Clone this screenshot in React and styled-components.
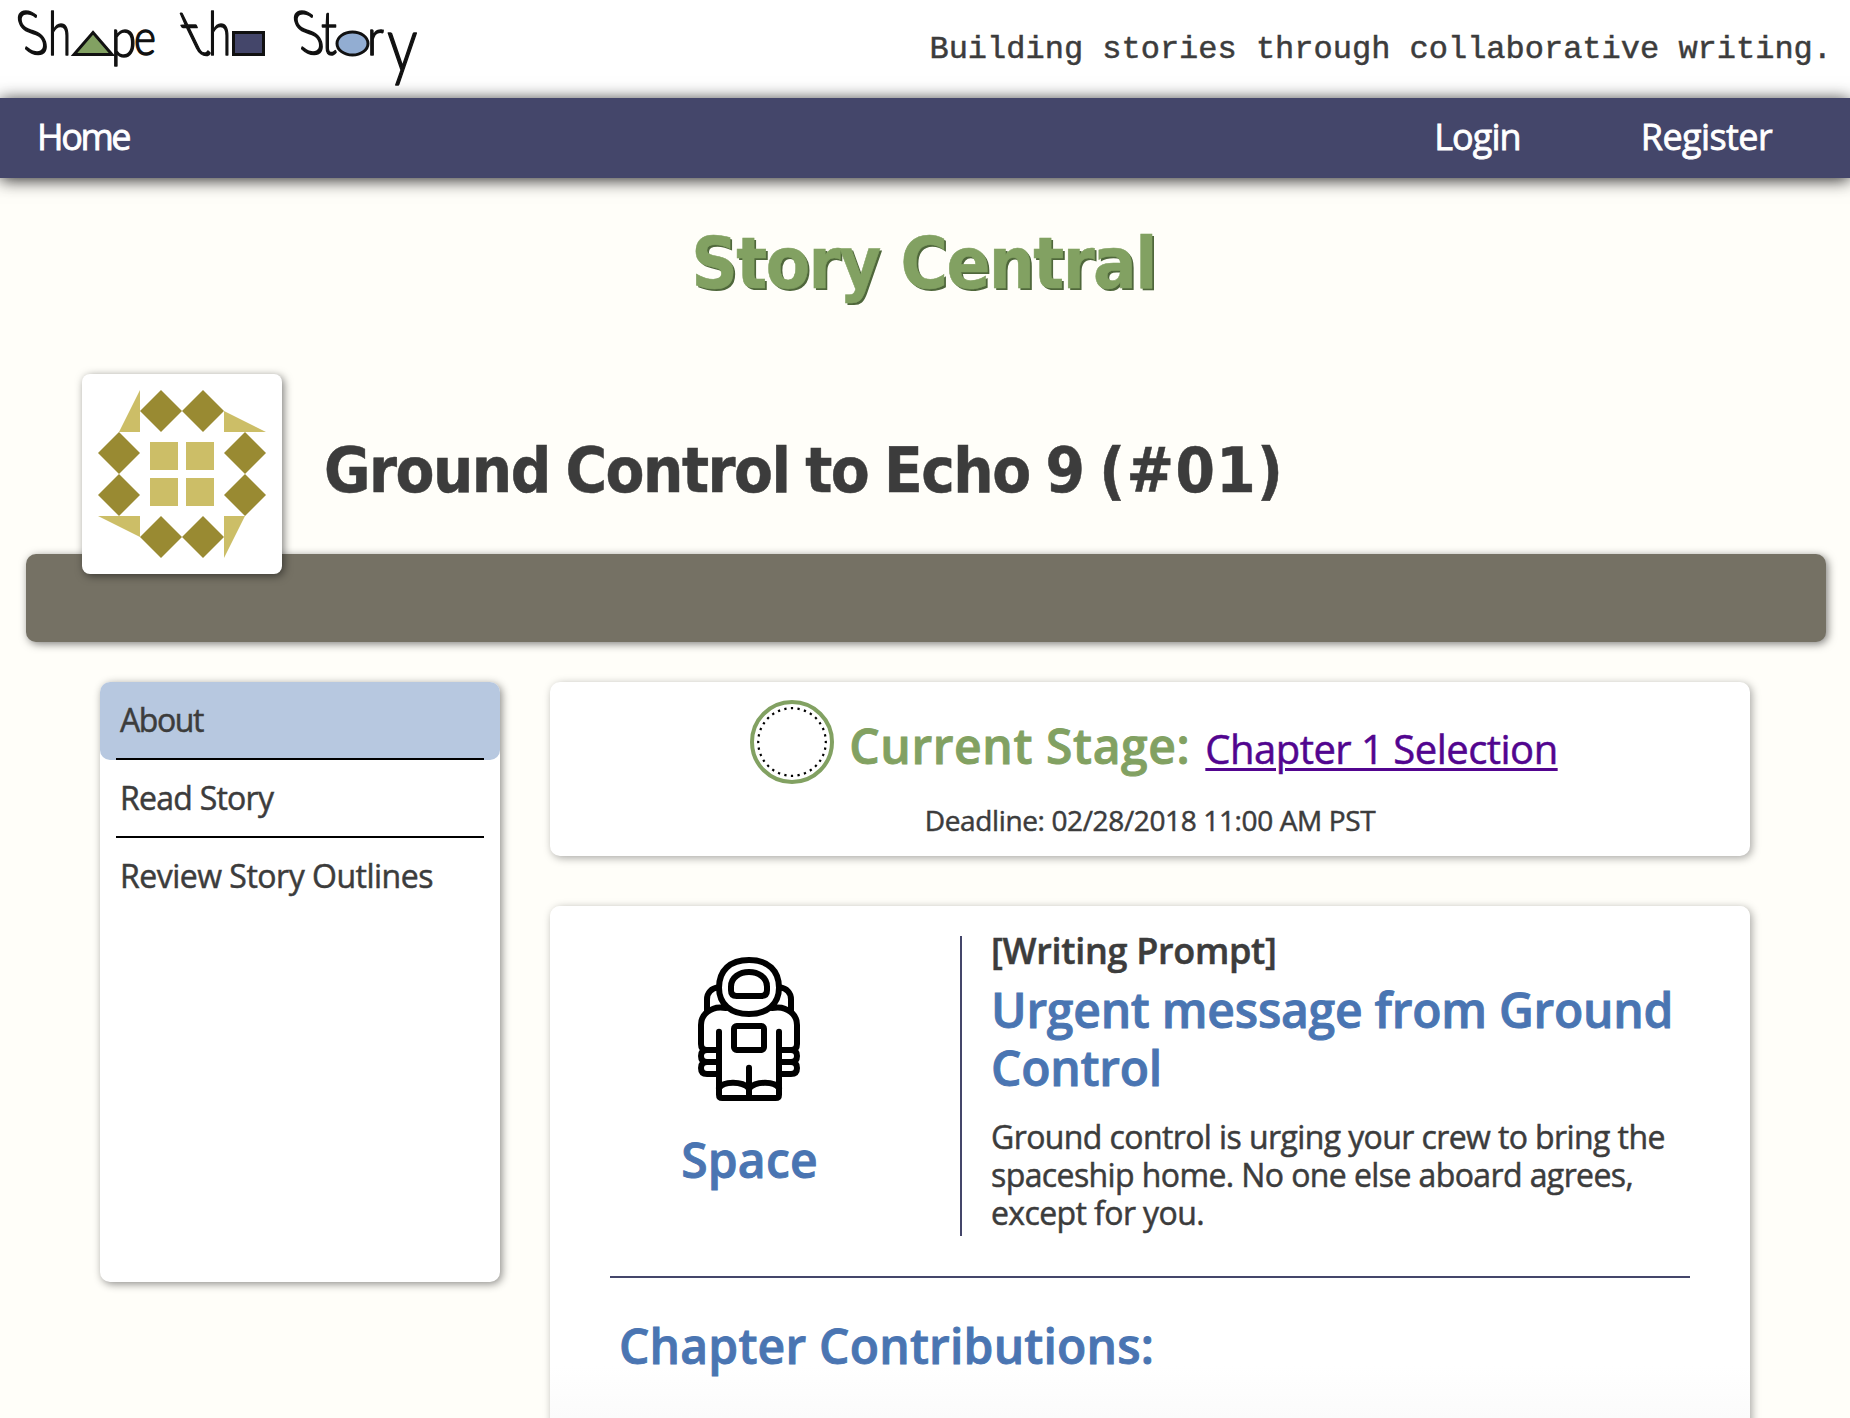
import React from "react";
import styled, { createGlobalStyle } from "styled-components";

const ink = "#3c3c3c";
const navy = "#44466a";
const green = "#82a162";
const blue = "#4a75b2";

const Global = createGlobalStyle`
  * { box-sizing: border-box; margin: 0; padding: 0; }
  body {
    margin: 0;
    background: #fffef9;
    color: ${ink};
    font-family: "Open Sans", "Noto Sans", sans-serif;
    -webkit-text-stroke: 0.5px;
  }
`;

const Page = styled.div`
  height: 1418px;
  overflow: hidden;
  background: #fffef9;
`;

const Header = styled.header`
  height: 98px;
  padding: 8px 18px 0;
  display: flex;
  justify-content: space-between;
  background: #fff;
`;

const LogoArt = styled.svg`
  display: block;
  overflow: visible;
`;

const Tagline = styled.p`
  padding-top: 2px;
  font-family: "Liberation Mono", monospace;
  font-size: 32px;
  line-height: 80px;
  white-space: nowrap;
`;

const Nav = styled.nav`
  position: relative;
  height: 80px;
  padding: 0 78px 3px 37px;
  display: flex;
  align-items: center;
  background: ${navy};
  box-shadow: 0 2px 16px rgba(0, 0, 0, 0.85);
  -webkit-text-stroke: 0.8px;
`;

const NavLink = styled.a`
  color: #fff;
  font-size: 36px;
  letter-spacing: ${(p) => p.$track}px;
  margin-left: ${(p) => p.$gap || 0}px;
  ${(p) => p.$push && "margin-left: auto;"}
`;

const PageTitle = styled.h1`
  margin-top: 42px;
  padding-right: 3px;
  font-family: "DejaVu Sans Condensed", "DejaVu Sans", sans-serif;
  font-stretch: condensed;
  font-size: 72px;
  line-height: 87px;
  letter-spacing: -1.6px;
  text-align: center;
  color: ${green};
  text-shadow: 2px 2px 0 #4f673b;
`;

const StoryHead = styled.section`
  height: 180px;
  margin-top: 67px;
  padding-left: 82px;
  display: flex;
  gap: 42px;
`;

const Avatar = styled.div`
  position: relative;
  z-index: 1;
  width: 200px;
  height: 200px;
  flex: none;
  border-radius: 8px;
  background: #fff;
  box-shadow: 2px 2px 8px rgba(0, 0, 0, 0.5);
  svg { display: block; }
`;

const StoryTitle = styled.h2`
  padding-top: 58px;
  font-family: "DejaVu Sans Condensed", "DejaVu Sans", sans-serif;
  font-stretch: condensed;
  font-size: 63px;
  line-height: 78px;
  letter-spacing: -1.5px;
  word-spacing: -2.4px;
  white-space: nowrap;
`;

const StoryNumber = styled.span`
  letter-spacing: 1.4px;
`;

const Band = styled.div`
  height: 88px;
  margin: 0 24px 0 26px;
  border-radius: 10px;
  background: #757164;
  box-shadow: 2px 2px 8px rgba(0, 0, 0, 0.5);
`;

const Columns = styled.main`
  padding: 40px 100px 0;
  display: flex;
  align-items: flex-start;
  gap: 50px;
`;

const Sidebar = styled.aside`
  width: 400px;
  height: 600px;
  flex: none;
  border-radius: 10px;
  background: #fff;
  box-shadow: 2px 2px 8px rgba(0, 0, 0, 0.45);
`;

const MenuItem = styled.a`
  display: block;
  height: 78px;
  padding: 0 16px;
  border-radius: 10px;
  background: ${(p) => (p.$active ? "#b7c8e0" : "transparent")};
  font-size: 32px;
  letter-spacing: ${(p) => p.$track}px;
`;

const MenuLabel = styled.span`
  display: block;
  height: 78px;
  padding-left: 4px;
  line-height: 76px;
  border-bottom: ${(p) => (p.$rule ? "2px solid #000" : "none")};
`;

const Content = styled.div`
  width: 1200px;
  display: flex;
  flex-direction: column;
  gap: 50px;
`;

const Card = styled.section`
  border-radius: 10px;
  background: #fff;
  box-shadow: 2px 2px 8px rgba(0, 0, 0, 0.35);
`;

const StageCard = styled(Card)`
  height: 174px;
  padding-top: 18px;
`;

const StageRow = styled.div`
  height: 84px;
  padding-left: 8px;
  display: flex;
  justify-content: center;
  gap: 15px;
`;

const StageText = styled.div`
  display: flex;
  align-items: baseline;
  gap: 15px;
  line-height: 91px;
`;

const StageLabel = styled.h2`
  font-size: 48px;
  font-weight: 600;
  letter-spacing: 0.6px;
  color: ${green};
  -webkit-text-stroke: 0.9px;
`;

const StageLink = styled.a`
  font-size: 40px;
  letter-spacing: -0.52px;
  color: #52058f;
  text-decoration: underline;
  text-decoration-thickness: 3px;
  text-underline-offset: 4px;
`;

const Deadline = styled.p`
  margin-top: 17px;
  font-size: 28px;
  line-height: 38px;
  letter-spacing: -0.37px;
  text-align: center;
`;

const PromptCard = styled(Card)`
  height: 560px;
  padding: 30px 60px 0;
  background: linear-gradient(#fff 460px, #fbfbfb 512px);
`;

const PromptRow = styled.div`
  height: 300px;
  display: flex;
`;

const Genre = styled.div`
  width: 352px;
  padding: 21px 72px 0 0;
  border-right: 2px solid ${navy};
  display: flex;
  flex-direction: column;
  align-items: center;
`;

const Heading = styled.h2`
  font-size: 48px;
  font-weight: 600;
  line-height: 58px;
  letter-spacing: ${(p) => p.$track}px;
  color: ${blue};
  -webkit-text-stroke: 0.9px;
`;

const GenreName = styled(Heading)`
  margin-top: 30px;
  padding-left: 1px;
`;

const Prompt = styled.div`
  flex: 1;
  padding: 1px 0 0 29px;
`;

const PromptTag = styled.h3`
  margin-bottom: 16px;
  font-size: 36px;
  font-weight: 600;
  line-height: 28px;
  letter-spacing: -0.3px;
`;

const PromptBody = styled.p`
  margin-top: 21px;
  font-size: 32px;
  line-height: 38px;
  letter-spacing: -0.6px;
`;

const Rule = styled.hr`
  height: 2px;
  margin: 40px 0 39px;
  border: 0;
  background: ${navy};
`;

const Contributions = styled(Heading)`
  padding-left: 9px;
`;

const Glyph = ({ x, y, size, sx = 1, skew = 0, children }) => (
  <text
    transform={`translate(${x} ${y}) skewX(${skew}) scale(${sx} 1)`}
    fontSize={size}
    fontFamily="Lato, sans-serif"
    fontWeight="300"
    fill="#111"
    stroke="#111"
    strokeWidth="1.6"
    strokeLinejoin="round"
  >
    {children}
  </text>
);

const Logo = () => (
  <LogoArt width="400" height="82" viewBox="0 0 400 82" aria-label="Shape the Story">
    <Glyph x={7} y={46} size={60} sx={0.84} skew={17}>S</Glyph>
    <Glyph x={30} y={47} size={62} sx={0.68}>h</Glyph>
    <path d="M75 24.5 L94 46.5 H56 Z" fill={green} stroke="#111" strokeWidth="3" />
    <Glyph x={93} y={49} size={54} sx={0.85}>p</Glyph>
    <Glyph x={116} y={47} size={50} sx={0.84}>e</Glyph>
    <Glyph x={176} y={47} size={62} sx={0.85} skew={26}>t</Glyph>
    <Glyph x={190} y={47} size={62} sx={0.68}>h</Glyph>
    <rect x="215.5" y="24.5" width="30" height="22" fill={navy} stroke="#111" strokeWidth="3" />
    <Glyph x={283} y={46} size={60} sx={0.84} skew={17}>S</Glyph>
    <Glyph x={303} y={47} size={62} sx={0.75}>t</Glyph>
    <ellipse cx="334.5" cy="35.5" rx="15.5" ry="11.5" fill="#92add2" stroke="#111" strokeWidth="3" />
    <Glyph x={349} y={47} size={50} sx={0.95}>r</Glyph>
    <Glyph x={369} y={63} size={76} sx={0.8}>y</Glyph>
  </LogoArt>
);

const diamonds = [[79, 37], [121, 37], [37, 79], [37, 121], [163, 79], [163, 121], [79, 163], [121, 163]];

const Identicon = () => (
  <svg width="200" height="200" viewBox="0 0 200 200">
    <g fill="#998a32">
      {diamonds.map(([x, y]) => (
        <path key={`${x}-${y}`} d={`M${x} ${y - 21} l21 21 l-21 21 l-21 -21 Z`} />
      ))}
    </g>
    <path
      fill="#ccbe67"
      d="M58 16V58H37ZM142 37L184 58H142ZM16 142H58V163ZM142 142H163L142 184ZM68 68h28v28h-28ZM104 68h28v28h-28ZM68 104h28v28h-28ZM104 104h28v28h-28Z"
    />
  </svg>
);

const StageDial = () => (
  <svg width="84" height="84" viewBox="0 0 84 84">
    <circle cx="42" cy="42" r="40" fill="none" stroke={green} strokeWidth="4" />
    <circle
      cx="42" cy="42" r="33.8" fill="none" stroke="#000" strokeWidth="2.2"
      pathLength="32" strokeDasharray="0.34 0.66" strokeDashoffset="0.17"
    />
  </svg>
);

const Astronaut = () => (
  <svg
    width="144" height="144" viewBox="51 111 432 432"
    fill="none" stroke="#000" strokeWidth="18" strokeLinecap="round" strokeLinejoin="round"
  >
    <path d="M267 120C325 120 357 152 357 203C357 252 322 282 267 282C212 282 177 252 177 203C177 152 209 120 267 120Z" />
    <path d="M213 200C213 171 240 156 267 156C294 156 321 171 321 200V211Q321 228 304 228H230Q213 228 213 211Z" />
    <path d="M175 202C154 205 141 218 141 238V273M359 202C380 205 393 218 393 238V273" />
    <path d="M198 264C184 262 170 262 160 266C136 275 123 292 123 315V372Q123 390 140 390H177M336 264C350 262 364 262 374 266C398 275 411 292 411 315V372Q411 390 394 390H357" />
    <path d="M141 390Q123 390 123 408Q123 426 141 426H177M141 426Q123 426 123 444Q123 462 141 462H177" />
    <path d="M393 390Q411 390 411 408Q411 426 393 426H357M393 426Q411 426 411 444Q411 462 393 462H357" />
    <path d="M177 335V524Q177 534 187 534H347Q357 534 357 524V335" />
    <rect x="222" y="318" width="90" height="72" rx="8" />
    <path d="M267 443V534M177 504C190 484 245 482 267 505C289 482 344 484 357 504" />
  </svg>
);

const menu = [
  { label: "About", track: -1.4, active: true, rule: true },
  { label: "Read Story", track: -0.75, rule: true },
  { label: "Review Story Outlines", track: -0.5 },
];

export default function App() {
  return (
    <Page>
      <Global />
      <Header>
        <Logo />
        <Tagline>Building stories through collaborative writing.</Tagline>
      </Header>
      <Nav>
        <NavLink $track={-2.4}>Home</NavLink>
        <NavLink $track={-0.9} $push>Login</NavLink>
        <NavLink $track={-0.6} $gap={120}>Register</NavLink>
      </Nav>
      <PageTitle>Story Central</PageTitle>
      <StoryHead>
        <Avatar><Identicon /></Avatar>
        <StoryTitle>Ground Control to Echo 9 <StoryNumber>(#01)</StoryNumber></StoryTitle>
      </StoryHead>
      <Band />
      <Columns>
        <Sidebar>
          {menu.map((m) => (
            <MenuItem key={m.label} $active={m.active} $track={m.track}>
              <MenuLabel $rule={m.rule}>{m.label}</MenuLabel>
            </MenuItem>
          ))}
        </Sidebar>
        <Content>
          <StageCard>
            <StageRow>
              <StageDial />
              <StageText>
                <StageLabel>Current Stage:</StageLabel>
                <StageLink>Chapter 1 Selection</StageLink>
              </StageText>
            </StageRow>
            <Deadline>Deadline: 02/28/2018 11:00 AM PST</Deadline>
          </StageCard>
          <PromptCard>
            <PromptRow>
              <Genre>
                <Astronaut />
                <GenreName $track={0.2}>Space</GenreName>
              </Genre>
              <Prompt>
                <PromptTag>[Writing Prompt]</PromptTag>
                <Heading $track={-0.25}>Urgent message from Ground Control</Heading>
                <PromptBody>
                  Ground control is urging your crew to bring the spaceship home. No one else aboard agrees, except for you.
                </PromptBody>
              </Prompt>
            </PromptRow>
            <Rule />
            <Contributions $track={0.2}>Chapter Contributions:</Contributions>
          </PromptCard>
        </Content>
      </Columns>
    </Page>
  );
}
